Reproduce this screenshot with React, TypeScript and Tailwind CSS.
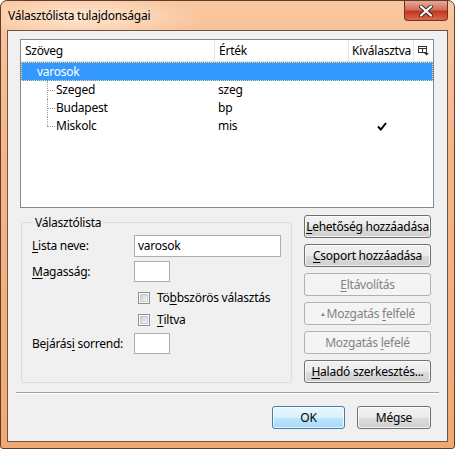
import React from "react";

const F = { fontFamily: '"Noto Sans", "Segoe UI", Arial, sans-serif', letterSpacing: "-0.25px" };

function U({ children }: { children: React.ReactNode }) {
  return <span className="underline underline-offset-2 decoration-1">{children}</span>;
}

function Btn({ children, disabled, def, className = "" }: { children: React.ReactNode; disabled?: boolean; def?: boolean; className?: string }) {
  if (disabled) {
    return (
      <div className={`h-[23px] rounded-[3px] border border-[#adb2b5] bg-[#f4f4f4] text-[#838383] flex items-center justify-center text-[12px] ${className}`}>
        <span className="whitespace-nowrap">{children}</span>
      </div>
    );
  }
  return (
    <div
      className={`h-[23px] rounded-[3px] border ${def ? "border-[#3c7fb1]" : "border-[#707070]"} flex items-center justify-center text-[12px] text-black ${className}`}
      style={{
        background: def
          ? "linear-gradient(#eaf6fd 0%, #d9f0fc 50%, #bee6fd 51%, #a7d9f5 100%)"
          : "linear-gradient(#f2f2f2 0%, #ebebeb 50%, #dddddd 51%, #cfcfcf 100%)",
        boxShadow: "inset 0 0 0 1px rgba(255,255,255,0.75)",
      }}
    >
      <span className="whitespace-nowrap">{children}</span>
    </div>
  );
}

function Check() {
  return (
    <div className="w-[12px] h-[12px] border border-[#8f8f8f] bg-white flex items-center justify-center">
      <div className="w-[8px] h-[8px] bg-gradient-to-br from-[#cbcfd5] to-[#f6f6f6] border border-[#c5c9ce]" />
    </div>
  );
}

function ChildRow({ name, val, last, checked }: { name: string; val: string; last?: boolean; checked?: boolean }) {
  return (
    <div className="flex h-[18px] items-center text-[12px]">
      <div className="w-[194px] flex h-full items-center">
        <div className="w-[26px]" />
        <div className="relative w-[9px] h-full">
          <div className={`absolute left-0 top-0 border-l border-dotted border-[#a0a0a0] ${last ? "h-[9px]" : "h-full"}`} />
          <div className="absolute left-0 top-[9px] w-[8px] border-t border-dotted border-[#a0a0a0]" />
        </div>
        <span>{name}</span>
      </div>
      <div className="w-[134px] pl-[3px]">{val}</div>
      <div className="w-[65px] flex justify-center">
        {checked && (
          <svg width="10" height="9" viewBox="0 0 10 9">
            <path d="M1 4.5 L3.8 7.5 L9 1" stroke="#000" strokeWidth="2" fill="none" />
          </svg>
        )}
      </div>
    </div>
  );
}

export default function App() {
  return (
    <div
      className="w-[455px] h-[449px] flex flex-col rounded-t-[7px] rounded-b-[3px] border border-[#5a3f2c]"
      style={{
        ...F,
        background:
          "radial-gradient(ellipse 120px 22px at 80px 16px, rgba(255,235,215,0.9), rgba(255,235,215,0) 100%), linear-gradient(#f9c7a0 0%, #f6b68a 30%, #f3a874 100%)",
      }}
    >
      <div className="h-[29px] flex items-start">
        <div className="pl-[7px] pt-[6px] text-[12px] text-black">Választólista tulajdonságai</div>
        <div className="ml-auto mr-[6px] w-[44px] h-[20px] rounded-b-[4px] border border-t-0 border-[#7a2d22] flex items-center justify-center"
          style={{ background: "linear-gradient(#e9a99a 0%, #d46f5c 45%, #c0391f 55%, #d9684c 100%)" }}>
          <svg width="14" height="12" viewBox="0 0 14 12">
            <path d="M2 1.5 L12 10.5 M12 1.5 L2 10.5" stroke="#3c2a28" strokeWidth="4" strokeLinecap="round" />
            <path d="M2 1.5 L12 10.5 M12 1.5 L2 10.5" stroke="#ffffff" strokeWidth="2.2" strokeLinecap="round" />
          </svg>
        </div>
      </div>
      <div className="mx-[6px] mb-[6px] flex-1 border border-[#6b5646] bg-[#f0f0f0] flex flex-col text-[12px] text-black">
        {/* list view */}
        <div className="ml-[12px] mt-[8px] w-[414px] h-[169px] border border-[#828790] bg-white flex flex-col">
          <div className="h-[22px] flex items-center border-b border-[#e5e5e5] text-[12px]">
            <div className="w-[194px] h-full flex items-center pl-[4px] border-r border-[#e5e5e5]">Szöveg</div>
            <div className="w-[134px] h-full flex items-center pl-[4px] border-r border-[#e5e5e5]">Érték</div>
            <div className="w-[65px] h-full flex items-center pl-[3px] border-r border-[#e5e5e5] whitespace-nowrap overflow-hidden">Kiválasztva</div>
            <div className="flex-1 flex items-center justify-center">
              <svg width="11" height="10" viewBox="0 0 11 10">
                <rect x="0.5" y="0.5" width="8" height="6" fill="none" stroke="#333" />
                <path d="M0.5 2.5 H8.5 M4.5 2.5 V6.5" stroke="#333" />
                <path d="M6 7 H11 L8.5 9.5 Z" fill="#333" />
              </svg>
            </div>
          </div>
          <div className="h-[19px] bg-[#3399ff] border border-dotted border-[#f5d47a] flex items-center text-white">
            <span className="pl-[15px]">varosok</span>
          </div>
          <ChildRow name="Szeged" val="szeg" />
          <ChildRow name="Budapest" val="bp" />
          <ChildRow name="Miskolc" val="mis" last checked />
        </div>

        <div className="flex mt-[7px]">
          {/* group box */}
          <fieldset className="ml-[13px] w-[268px] h-[168px] border border-[#d5dfe5] rounded-[3px] px-[10px] pb-0">
            <legend className="px-[2px] ml-[1px] text-[12px] leading-[15px]">Választólista</legend>
            <div className="flex items-center h-[22px] mt-[5px]">
              <div className="w-[102px]"><U>L</U>ista neve:</div>
              <div className="w-[147px] h-[22px] border border-[#abadb3] bg-white flex items-center pl-[3px]">varosok</div>
            </div>
            <div className="flex items-center h-[21px] mt-[4px]">
              <div className="w-[102px]"><U>M</U>agasság:</div>
              <div className="w-[36px] h-[21px] border border-[#abadb3] bg-white" />
            </div>
            <div className="flex items-center h-[15px] mt-[8px] pl-[106px]">
              <Check />
              <span className="ml-[7px]">Tö<U>b</U>bszörös választás</span>
            </div>
            <div className="flex items-center h-[15px] mt-[7px] pl-[106px]">
              <Check />
              <span className="ml-[7px]"><U>T</U>iltva</span>
            </div>
            <div className="flex items-center h-[21px] mt-[6px]">
              <div className="w-[102px]">Bejárás<U>i</U> sorrend:</div>
              <div className="w-[36px] h-[21px] border border-[#abadb3] bg-white" />
            </div>
          </fieldset>

          {/* buttons */}
          <div className="ml-[12px] w-[127px] flex flex-col gap-[6px]">
            <Btn><U>L</U>ehetőség hozzáadása</Btn>
            <Btn><U>C</U>soport hozzáadása</Btn>
            <Btn disabled><U>E</U>ltávolítás</Btn>
            <Btn disabled><span className="text-[6px] align-[2px] mr-[1px]">▲</span>Mozgatás <U>f</U>elfelé</Btn>
            <Btn disabled>Mozgatás <U>l</U>efelé</Btn>
            <Btn><U>H</U>aladó szerkesztés...</Btn>
          </div>
        </div>

        <div className="mx-[8px] mt-[9px] border-t border-[#a0a0a0] border-b border-b-white" />

        <div className="flex justify-end mt-[12px] mr-[16px] gap-[12px]">
          <Btn def className="w-[73px]">OK</Btn>
          <Btn className="w-[74px]">Mégse</Btn>
        </div>
      </div>
    </div>
  );
}
